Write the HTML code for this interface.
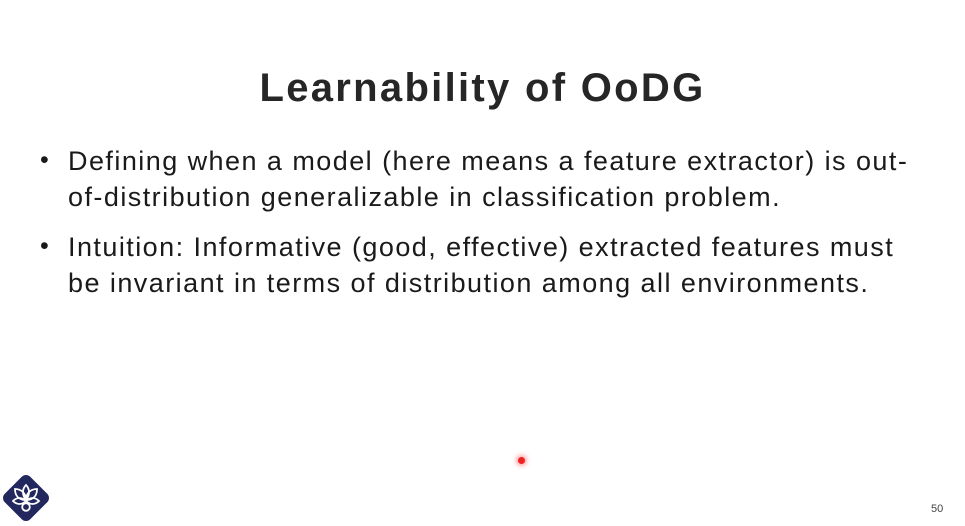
<!DOCTYPE html>
<html><head><style>
body{margin:0;width:965px;height:526px;background:#fff;position:relative;overflow:hidden;font-family:"Liberation Sans",sans-serif;}
h1{position:absolute;left:0;width:965px;top:66px;margin:0;text-align:center;font-size:40px;font-weight:bold;color:#262626;letter-spacing:2.3px}
.b{position:absolute;left:68px;font-size:27px;color:#1a1a1a;line-height:36px;white-space:nowrap;letter-spacing:1.45px}
.d{position:absolute;left:40px;font-size:25px;color:#1a1a1a}
</style></head><body>
<h1>Learnability of OoDG</h1>
<div class="d" style="top:146px">•</div>
<div class="b" style="top:143px">Defining when a model (here means a feature extractor) is out-<br>of-distribution generalizable in classification problem.</div>
<div class="d" style="top:232px">•</div>
<div class="b" style="top:229px">Intuition: Informative (good, effective) extracted features must<br>be invariant in terms of distribution among all environments.</div>
<div style="position:absolute;left:518px;top:457px;width:7px;height:7px;border-radius:50%;background:#e22;box-shadow:0 0 4px 2px rgba(255,80,80,.5)"></div>
<div style="position:absolute;left:931px;top:503px;font-size:11px;color:#444">50</div>
<svg style="position:absolute;left:0;top:472px" width="52" height="52" viewBox="0 0 52 52">
<rect x="8" y="8" width="36" height="36" rx="6" transform="rotate(45 26 26)" fill="#22275e"/>
<g fill="none" stroke="#fff" stroke-width="1.8">
<path d="M26 13c-4 4-4 10 0 15c4-5 4-11 0-15z"/>
<path d="M15 17c0 7 4 11 11 11c0-6-4-11-11-11z"/>
<path d="M37 17c0 7-4 11-11 11c0-6 4-11 11-11z"/>
<path d="M13 29c4 4 9 4 13 0c-4-4-9-4-13 0z"/>
<path d="M39 29c-4 4-9 4-13 0c4-4 9-4 13 0z"/>
<circle cx="26" cy="35" r="3.8"/>
</g></svg>
</body></html>
